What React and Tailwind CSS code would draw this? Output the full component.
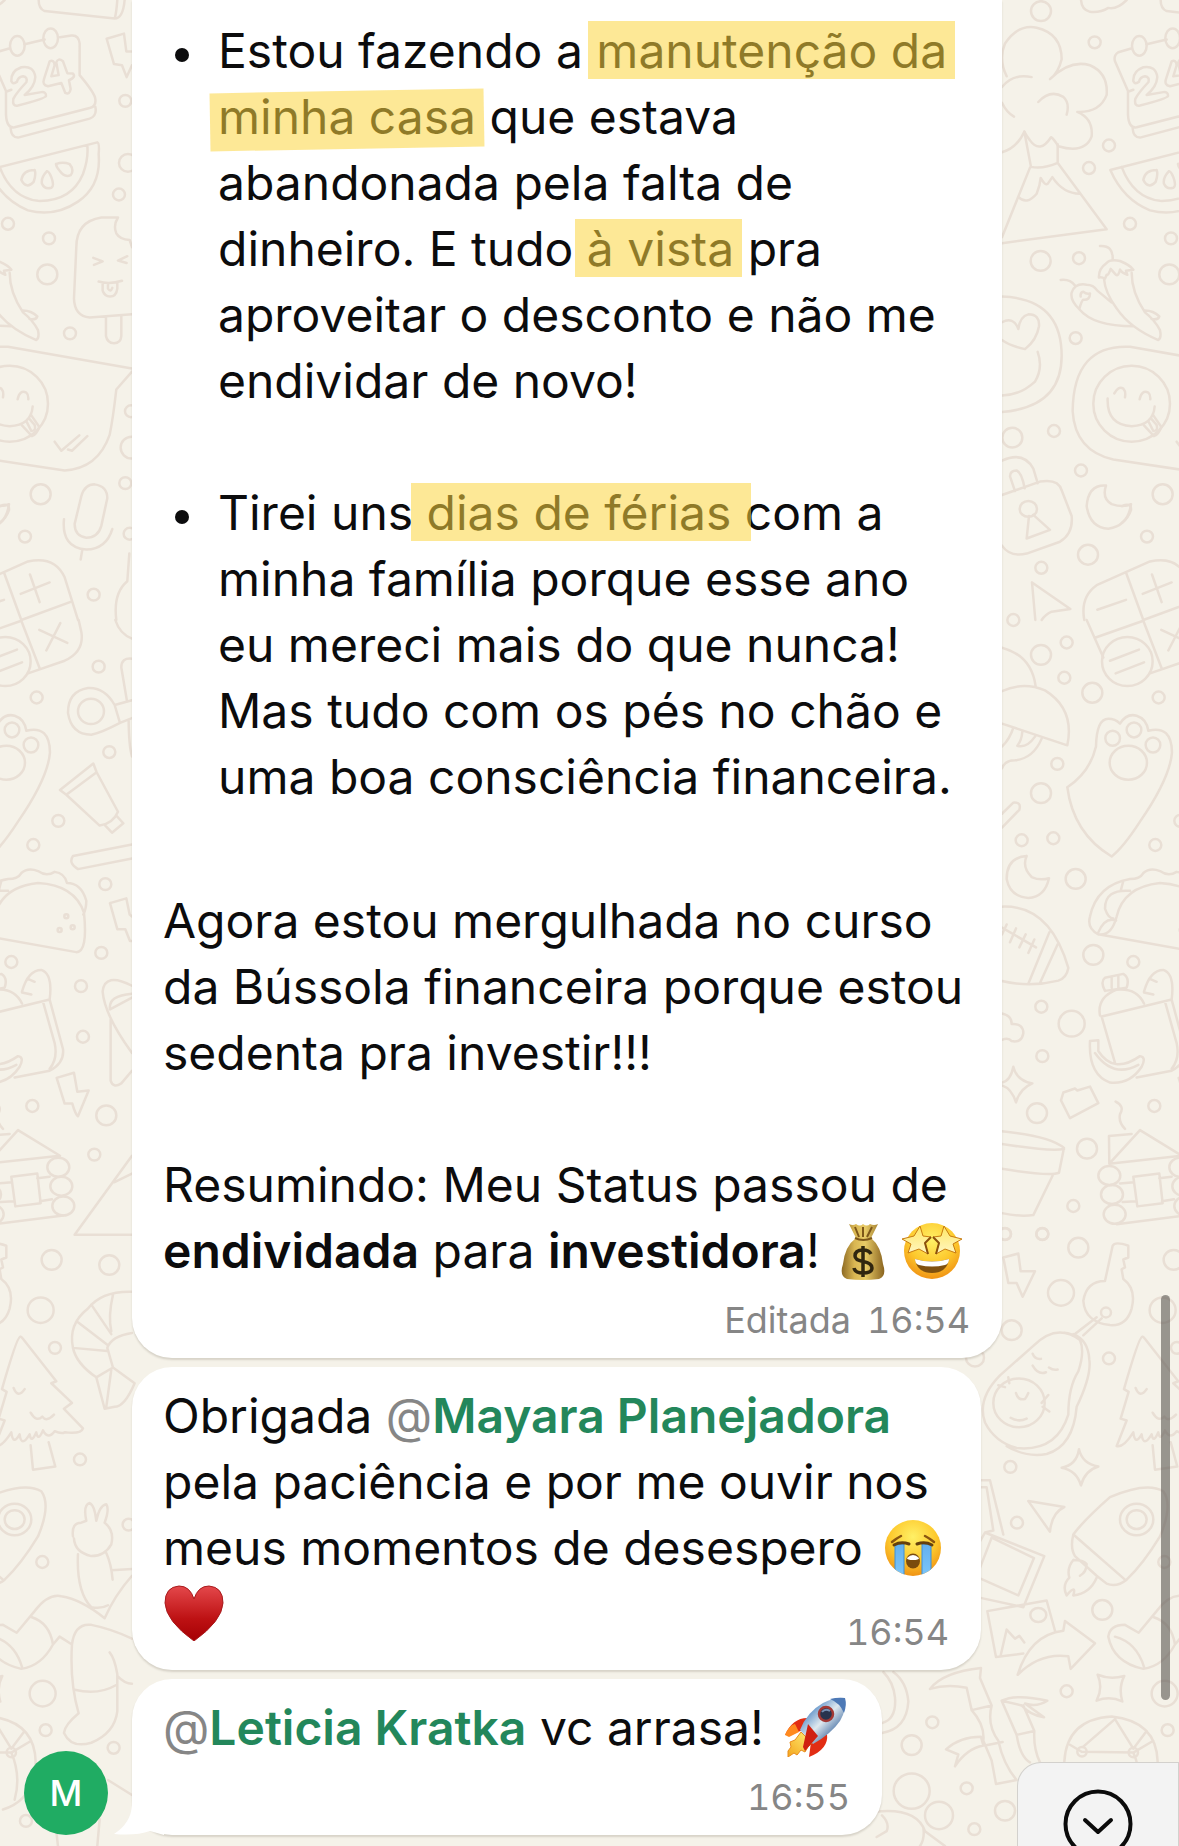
import React from "react";

/* Wallpaper doodles: [paths, circles (x, y, radius), ellipses (x, y, rx, ry)] per vertical band */
const bandTop = {
  paths: [
    "M273 0Q275 25 300 30Q330 33 355 20Q380 25 410 0M512 0Q512 22 530 28L740 47Q765 47 770 0M748 0Q745 35 740 47",
    "M50 193Q25 150 45 110Q85 60 140 70Q215 85 215 150Q205 185 180 200Q240 150 300 165Q355 185 350 240Q330 285 262 283Q310 300 305 345Q285 390 205 370Q190 350 183 347Q150 390 120 355Q110 345 103 333Q80 375 36 385M36 220Q70 185 125 195M36 260Q50 285 72 295M145 258Q180 225 220 245Q240 260 230 290",
    "M103 333L123 422Q160 428 203 412V365M120 424L36 600M36 615L350 580L205 414M85 498Q110 520 140 490Q150 470 152 450Q165 470 173 465L187 448Q220 490 270 490",
    "M426 122L385 132Q370 140 375 155L414 230V290Q416 325 440 322L665 273Q685 270 682 250Q680 235 635 190V110Q632 88 610 90L576 94M470 112L530 100M428 325Q430 348 450 348L665 300Q688 293 682 270M414 232L430 227",
    "M361 430L688 360Q695 362 692 390Q700 470 630 510Q560 550 480 532Q400 505 361 430M395 422Q430 500 510 508Q610 510 645 440Q662 400 658 368M500 430Q465 430 460 455Q475 480 497 460Q505 440 500 430M537 433Q518 450 522 465Q530 480 550 475Q560 470 550 448Q543 433 537 433M564 415Q585 408 605 415Q620 430 608 443Q590 450 575 432Q565 422 564 415",
    "M750 550H700Q625 560 625 625L618 755Q620 800 665 803L792 795M750 550Q735 570 745 590Q755 605 785 607L792 625M714 802V850Q718 868 738 868Q758 868 760 850V800M676 652L704 661L678 670M778 648L750 659L776 665M692 712Q725 720 762 710M704 716V735Q710 750 726 750Q745 750 748 730V714M720 718V730Q728 740 733 728",
    "M330 622Q370 620 368 655M327 702Q325 680 350 665Q360 655 390 660Q420 670 430 682L408 685L412 695Q395 690 390 682Q385 700 378 695L362 680Q355 698 350 695L345 705Q335 700 327 702M342 705Q345 740 380 780Q420 830 505 860Q515 855 510 835Q495 810 465 790Q425 740 425 690M212 708Q240 705 255 722M268 782Q240 760 245 740Q255 715 290 720Q310 720 322 735L365 765M268 782Q275 760 280 758Q300 760 300 742Q290 745 280 738Q270 740 272 750M268 782Q310 825 430 825M465 785Q490 785 508 800Q505 810 485 807",
    "M36 750Q215 755 215 900Q215 1030 36 1042M36 815Q70 800 85 832Q90 800 115 795Q150 795 147 825Q140 860 105 883Q60 875 36 860M143 890Q160 930 135 965Q90 1000 36 1000",
    "M792 932L420 877Q250 870 248 1040Q255 1140 370 1162L590 1190Q690 1185 725 1100Q735 1060 745 985L792 940M373 995Q385 975 400 983Q408 990 405 1005M449 1010Q455 985 475 993Q482 998 481 1010M353 1008Q350 1075 425 1078Q490 1075 494 1028M462 1076L492 1103Q505 1100 514 1080L488 1048M475 1065L490 1090Q505 1090 500 1075L485 1060M560 1117L580 1140L634 1101M600 1137L612 1140L658 1103",
    "M640 1255Q650 1225 680 1225Q718 1230 718 1260L700 1330Q690 1360 655 1360Q620 1355 620 1325ZM588 1313Q580 1385 655 1390Q715 1388 733 1338M643 1390L638 1415",
    "M36 1165Q100 1140 130 1185L143 1222M75 1242L60 1205Q60 1190 80 1190Q95 1195 104 1235M36 1252L150 1218Q205 1210 215 1240L245 1305Q250 1350 210 1370L110 1400Q60 1410 36 1380M117 1305L110 1362L180 1340L130 1302",
    "M348 1228Q295 1225 290 1280Q300 1335 355 1337Q415 1330 423 1275Q400 1285 365 1275Q335 1260 348 1228",
    "M126 1473L241 1540L185 1547Q165 1555 155 1568M126 1473L136 1568M283 1568Q270 1510 320 1480L480 1420Q560 1405 590 1460L630 1568M408 1448L460 1568L608 1522M322 1542L408 1517M458 1502L545 1473M486 1453L515 1523",
    "M784 1400L778 1470Q735 1500 745 1568M716 98L768 85L775 130L792 130M716 98L738 162L762 165L776 195L792 165M396 1280Q425 1270 423 1290Q415 1310 396 1322",
  ],
  circles: [[153,28,10],[314,107,6],[357,368,6],[297,425,6],[420,566,6],[267,653,6],[152,660,10],[257,855,6],[67,1107,10],[192,1090,6],[273,1190,6],[518,1250,10],[471,1357,6],[294,1403,10],[154,1436,6],[543,603,6],[538,694,10],[772,255,6],[753,492,6],[606,843,6],[677,1504,6],[772,1222,6],[780,412,9],[789,1040,6],[791,1132,11],[785,1350,6]],
  ellipses: [[448,116,22,25],[548,97,22,25],[425,1021,115,96],[115,1287,26,20]],
};

const bandMiddle = {
  paths: [
    "M290 0L340 95M315 45L460 2L515 122M480 135L590 103Q650 80 640 30L632 0M360 103L447 75M377 135L462 107M514 25L598 58M577 8L535 77",
    "M36 70Q125 90 137 168M36 180Q100 155 165 178Q255 225 232 317L36 262M70 272Q60 300 36 320M97 282Q95 305 82 318Q110 325 135 295M155 300Q130 350 75 355Q45 355 36 375",
    "M232 423Q300 385 318 320Q320 250 355 250Q375 250 390 262Q410 235 440 242Q470 250 475 280Q545 265 546 335Q540 400 450 510Q400 575 365 598Q250 540 232 423",
    "M740 215Q710 170 660 172Q600 180 600 235Q610 290 670 290Q700 285 756 260L740 215L792 203M756 260L792 248M792 98Q760 95 760 120L777 205M782 255Q783 320 792 345M742 0Q755 35 792 47",
    "M576 430L676 363L686 385L750 485Q735 515 695 520L595 442ZM595 442L686 385M712 520L732 538L766 514L745 495M792 568L615 597Q600 615 630 630L792 603M36 490L70 462Q95 460 88 480L36 525",
    "M110 597Q50 600 50 655Q60 700 115 703Q165 700 177 653Q150 660 125 650Q95 625 110 597M36 725Q180 720 235 880Q230 905 205 912Q120 930 36 913M178 790L115 920M203 820L150 918M36 778L138 828M50 770L36 795M78 780L60 815M107 795L88 828M133 808L115 842",
    "M325 795Q290 780 300 750Q320 670 420 655Q450 655 460 640Q480 625 510 635Q535 650 560 637Q590 640 597 665Q640 665 655 710Q655 730 646 745M325 795L625 840Q660 840 648 740Q620 670 510 665Q400 675 380 750Q365 800 325 795M400 660L392 685M325 790Q345 750 378 760M420 685Q345 680 345 730Q355 755 370 755",
    "M335 1003L545 960M335 1003L375 1120M330 1000Q320 955 380 935Q440 930 462 970M462 940Q480 885 520 885Q555 895 545 960L585 1085Q590 1120 545 1140L440 1157M525 965L560 1070Q570 1110 545 1135M345 938Q330 915 345 905L400 895Q420 905 410 930L345 938M365 905V930M385 900V930M300 1065L325 1063V1090Q370 1150 450 1103Q470 1105 455 1130Q420 1175 360 1170Q295 1150 300 1065M315 1095Q370 1160 445 1125M478 907L500 915M462 942L490 947",
    "M566 1158L618 1145L628 1193L662 1190L630 1255Q622 1250 613 1223L590 1223ZM726 716L775 704L785 745L792 750M726 716L748 782L772 782L786 812H792",
    "M36 995Q65 1000 65 1022Q100 1020 100 1045Q95 1070 65 1065Q55 1055 36 1062M36 1170Q62 1165 70 1130Q80 1165 127 1172Q90 1185 78 1220Q65 1185 36 1177M213 1215L220 1195L255 1185L262 1190L300 1180L325 1222L240 1260ZM377 1218Q405 1230 390 1250Q385 1270 405 1287",
    "M425 1300L357 1305L358 1375L450 1290L576 1355L358 1375M430 1408L508 1400L518 1475L442 1483ZM390 1425L432 1422M398 1472L438 1470M508 1412L545 1408M516 1470L552 1465M380 1528L586 1506",
    "M36 1293Q180 1305 222 1335L207 1398Q180 1408 36 1388M36 1325Q180 1345 222 1338M188 1405L130 1505Q90 1510 36 1500",
    "M792 925Q710 890 704 940Q710 1000 792 1095M728 1010V1165Q735 1185 760 1172L792 1140M792 955L726 985Q720 950 792 945M792 1355L620 1555H792M738 1422L792 1400",
  ],
  circles: [[70,0,6],[153,88,10],[230,57,6],[223,146,6],[307,184,10],[506,196,6],[202,364,6],[153,438,10],[95,557,6],[190,552,6],[496,569,6],[257,655,10],[310,847,10],[430,865,6],[154,978,6],[245,1021,13],[157,1103,6],[141,1247,10],[291,1337,10],[493,1229,6],[250,1482,6],[45,1553,6],[157,1553,6],[692,118,6],[724,334,6],[571,508,6],[712,668,6],[700,842,6],[639,926,6],[645,1054,6],[715,1253,10],[679,1352,6],[595,749,2],[575,784,2],[614,777,2]],
  ellipses: [[412,105,76,62],[368,299,22,19],[432,278,22,19],[489,316,22,19],[415,361,56,43],[669,231,39,32],[358,1405,33,24],[366,1453,33,24],[374,1503,33,24],[571,1384,33,24],[580,1432,33,24],[586,1482,33,24]],
};

const bandBottom = {
  paths: [
    "M1152 157Q1060 155 1020 200Q960 240 975 300Q985 340 1045 375L1095 350L1160 390Q1130 450 1100 450L1070 455L1045 375M1090 355L1075 450M1152 262Q1090 270 1078 300L1095 350M990 235L1078 292M1030 190L1090 265M1095 165Q1080 220 1090 258M975 300L1078 308",
    "M816 272Q806 275 762 405L776 412L752 480L770 485L740 550Q760 555 790 515Q795 550 815 520Q820 555 845 520Q850 545 865 515Q870 540 885 510Q900 535 920 512Q940 520 950 515Q1000 520 1005 505L948 455L972 440L910 390L925 385L823 275Q819 270 816 272M848 548L855 610L922 602L902 540M797 402Q810 430 830 405M848 465Q865 490 883 475Q895 490 918 470",
    "M610 775Q640 740 720 680Q830 640 880 665Q910 700 870 780Q820 850 770 890Q740 910 710 900L680 880L615 830Q600 810 610 775L765 890M610 840Q590 860 598 885Q575 905 590 930Q620 900 610 930Q660 925 680 885M610 840Q640 840 650 850Q650 870 630 880",
    "M975 780Q970 745 1000 745L1015 740Q1005 700 1025 695Q1040 700 1045 740Q1055 700 1075 698Q1085 710 1070 745Q1100 765 1090 800Q1070 830 1030 830Q980 820 978 785M990 825Q985 920 1030 960Q1060 965 1080 955M1075 822Q1090 850 1094 890M1090 866L1152 863",
    "M715 1035Q720 1005 765 1005L806 1025L860 970Q900 925 940 932Q1000 940 1070 988Q1100 930 1152 880M850 985Q905 1000 915 1055Q880 1110 820 1117Q730 1100 715 1035M735 1035Q800 1050 822 1112M915 1055L935 1035L972 1055Q980 1000 1030 1005Q1090 1015 1152 1040M972 1055Q965 1150 992 1230Q950 1260 948 1280Q970 1320 1030 1305Q1100 1280 1108 1225V1130Q1100 1090 1085 1075M980 1170Q1050 1185 1105 1158M1108 1135Q1130 1155 1152 1155",
    "M705 130L728 40Q735 28 775 40V70L760 75L765 95L755 100L760 125Q800 150 785 200Q770 245 720 242Q645 235 640 180Q650 130 705 130M695 225L640 268M680 222L610 268",
    "M630 280Q560 235 490 295L390 370Q320 430 345 490Q375 540 440 555Q560 565 595 470Q595 400 625 360Q645 310 630 280Q600 260 580 262M410 550Q470 580 530 570Q610 550 620 450Q665 370 658 330Q655 280 610 265M488 315Q495 330 513 328M537 350Q550 358 563 355M488 345Q505 370 528 362M438 415Q445 435 465 430Q470 425 475 415M422 478Q445 490 470 480M385 395L405 400M415 375L418 390M515 440L535 420M518 450L538 462",
    "M400 70L445 60L452 105L495 105L458 170L440 135H415ZM627 558Q637 595 685 602Q645 612 633 650Q620 612 575 605Q620 598 627 558M475 690L583 705Q545 720 540 768ZM683 1132Q720 1145 763 1135Q745 1165 757 1200Q720 1185 680 1198Q700 1165 683 1132",
    "M325 637H360L400 775M325 655H350L370 765L345 770L523 830L460 960L325 935M365 783L492 835L445 930L325 885M345 770L325 800M365 783L330 860M555 1020L530 943L352 970L378 1087L460 1078M392 1083L410 1017L435 1040L448 1033L463 1050M443 1132Q480 1030 580 1020L585 995L675 1052L602 1117L595 1085Q510 1075 443 1132",
    "M180 1168Q220 1125 333 1115L330 1140L365 1210Q350 1260 385 1300Q400 1360 440 1400L378 1410L365 1350L340 1300Q345 1260 305 1222L290 1165Q230 1155 180 1168M305 1222L365 1210M345 1312L398 1303M455 1210L395 1198Q440 1180 532 1198Q500 1215 465 1205L522 1240Q480 1235 455 1210M395 1198L440 1285Q450 1340 480 1355M460 1210L493 1275Q490 1320 510 1355M440 1285L493 1275M228 1322Q270 1290 333 1290L340 1312Q290 1320 255 1365L265 1335Z",
    "M583 1353Q590 1245 725 1238Q860 1250 863 1353Q860 1450 765 1475M600 1310L635 1328L790 1330L850 1300M640 1315L735 1245L790 1320L830 1275M790 1330Q820 1390 800 1450",
    "M36 1280Q110 1270 115 1200Q110 1150 70 1125M36 1255Q80 1245 75 1190Q70 1150 40 1125M20 1480Q140 1470 165 1530L225 1568M36 1490Q60 1510 50 1530L20 1545M160 1520Q165 1550 150 1568M925 1530L930 1568M1055 1500L1048 1568M1080 1400L1152 1438",
  ],
  circles: [[517,10,6],[625,45,10],[573,160,13],[425,255,10],[717,327,6],[421,603,6],[441,745,6],[697,967,10],[590,1174,6],[187,1253,6],[125,1311,10],[125,1428,18],[207,1490,14],[290,1421,6],[405,1478,10],[313,1525,6],[405,10,6],[315,325,9],[911,76,10],[1084,89,10],[878,204,13],[921,300,6],[996,584,6],[883,845,6],[884,1180,13],[893,1273,6],[1097,1318,6],[834,1504,6],[1142,750,6],[708,210,5]],
  ellipses: [[800,737,50,40],[800,737,30,24],[447,440,77,62],[505,980,24,18],[636,1328,14,12],[790,1330,14,12]],
};

function Band({ data, transform, children }) {
  return (
    <g transform={transform}>
      {data.paths.map((d) => (
        <path key={d} d={d} vectorEffect="non-scaling-stroke" />
      ))}
      {data.circles.map(([x, y, r]) => (
        <ellipse key={`${x}-${y}`} cx={x} cy={y} rx={r * 3} ry={r * 2.5} vectorEffect="non-scaling-stroke" />
      ))}
      {data.ellipses.map(([x, y, rx, ry]) => (
        <ellipse key={`${x}-${y}-${rx}`} cx={x} cy={y} rx={rx} ry={ry} vectorEffect="non-scaling-stroke" />
      ))}
      {children}
    </g>
  );
}

function Doodles() {
  return (
    <>
      <Band data={bandTop} transform="translate(990 0) scale(.3333 .3954)">
        <path
          vectorEffect="non-scaling-stroke"
          d="M430 205Q428 180 460 170Q498 165 502 195Q500 220 470 240L520 233Q535 232 534 243Q530 250 450 267Q432 270 436 250Q445 235 475 208Q480 195 465 193Q450 195 447 207Q435 215 430 205M545 155Q558 150 560 165L550 193L572 190L565 158Q570 145 585 155L598 185L615 186Q625 195 603 203L608 225Q605 240 592 235L580 210L540 218Q522 215 528 200Z"
        />
      </Band>
      <Band data={bandMiddle} transform="translate(990 620) scale(.3333 .3954)" />
      <Band data={bandBottom} transform="translate(870 1230) scale(.3333 .3929)" />
    </>
  );
}

function Wallpaper() {
  return (
    <svg aria-hidden="true" className="pointer-events-none absolute inset-0 h-full w-full">
      <g fill="none" stroke="#e9dfd5" strokeWidth="2.500" strokeLinecap="round" strokeLinejoin="round">
        <Doodles />
        <g transform="translate(-1122 0)">
          <Doodles />
        </g>
      </g>
    </svg>
  );
}

function FaceGradient({ id }) {
  return (
    <radialGradient id={id} cx=".5" cy=".3" r=".75">
      <stop offset="0" stopColor="#fff066" />
      <stop offset=".55" stopColor="#fdc92d" />
      <stop offset="1" stopColor="#ee8a10" />
    </radialGradient>
  );
}

const emoji = "inline-block align-[-12px]";

function MoneyBag() {
  return (
    <svg role="img" aria-label="saco de dinheiro" viewBox="0 0 44 58" className={`${emoji} ml-2 h-[58px] w-11`}>
      <defs>
        <linearGradient id="bag">
          <stop offset="0" stopColor="#8d6a24" />
          <stop offset=".3" stopColor="#d9b652" />
          <stop offset=".55" stopColor="#e8cb66" />
          <stop offset="1" stopColor="#8a6420" />
        </linearGradient>
      </defs>
      <path d="M8 2Q12 4 15 2Q19 5 22 2Q26 5 29 2Q33 4 37 2L30 16Q40 24 42 42Q46 54 38 57Q22 59 6 57Q-2 54 2 42Q4 24 15 16Z" fill="url(#bag)" />
      <path d="M14 5L18 15M22 5V15M31 5L26 15M14 16Q22 20 31 16" stroke="#7d5719" strokeWidth="2" fill="none" />
      <path d="M30 32Q28 28 22 28Q14 28 14 34Q14 38 22 39.500Q31 41 31 46Q31 51 22 51Q14 51 13 46M22 24V55" fill="none" stroke="#30260f" strokeWidth="3.500" />
    </svg>
  );
}

function StarStruck() {
  const star = "M19 4L22 14L30 15L24 21L27 32L18 27L7 31L10 22L1 17L13 14Z";
  return (
    <svg role="img" aria-label="rosto com olhos de estrela" viewBox="0 0 62 58" className={`${emoji} ml-4 h-[58px] w-[62px]`}>
      <defs>
        <FaceGradient id="faceStar" />
        <linearGradient id="star" x2="0" y2="1">
          <stop offset="0" stopColor="#ffe766" />
          <stop offset="1" stopColor="#fff6c2" />
        </linearGradient>
      </defs>
      <circle cx="31" cy="29" r="28" fill="url(#faceStar)" />
      <path d={star} fill="url(#star)" stroke="#c77a10" strokeWidth="1" />
      <path d={star} transform="translate(62 0) scale(-1 1)" fill="url(#star)" stroke="#c77a10" strokeWidth="1" />
      <path d="M30 15L24 21L27 32M32 15L38 21L35 32" fill="none" stroke="#8a500c" strokeWidth="2" strokeLinejoin="round" />
      <path d="M14 37Q31 42 48 37Q46 51 31 51Q16 51 14 37Z" fill="#80510f" />
      <path d="M14 37Q31 42 48 37Q48 42 44 43Q31 46 18 43Q14 42 14 37Z" fill="#fff" />
    </svg>
  );
}

function Crying() {
  return (
    <svg role="img" aria-label="rosto chorando" viewBox="0 0 58 58" className={`${emoji} ml-2 h-[58px] w-[58px]`}>
      <defs>
        <FaceGradient id="faceCry" />
        <linearGradient id="tear" x2="0" y2="1">
          <stop offset="0" stopColor="#63b0ee" />
          <stop offset="1" stopColor="#7cc6fa" />
        </linearGradient>
        <clipPath id="cryClip">
          <circle cx="29" cy="29" r="28" />
        </clipPath>
      </defs>
      <circle cx="29" cy="29" r="28" fill="url(#faceCry)" />
      <g clipPath="url(#cryClip)">
        <path d="M11 25H20V58H11ZM38 25H47V58H38Z" fill="url(#tear)" stroke="#3f8fd6" strokeWidth="1" />
      </g>
      <path d="M8 23Q13 19 17 17M50 23Q45 19 41 17" stroke="#8a5510" strokeWidth="2.500" fill="none" strokeLinecap="round" />
      <path d="M10 26Q17 22 25 25M48 26Q41 22 33 25" stroke="#65400c" strokeWidth="3" fill="none" strokeLinecap="round" />
      <ellipse cx="29" cy="42" rx="7" ry="7.500" fill="#7a4b0d" />
      <path d="M23 39Q29 33 35 39Q35 41 29 41Q23 41 23 39Z" fill="#fff" />
    </svg>
  );
}

function Heart() {
  return (
    <svg role="img" aria-label="coração" viewBox="0 0 60 56" className="mt-1 ml-px h-14 w-[60px]">
      <defs>
        <linearGradient id="heart" x2="0" y2="1">
          <stop offset="0" stopColor="#e4484b" />
          <stop offset=".6" stopColor="#bd1113" />
          <stop offset="1" stopColor="#a50004" />
        </linearGradient>
      </defs>
      <path d="M30 14Q26 1 15 1Q1 2 1 18Q2 36 30 56Q58 36 59 18Q59 2 45 1Q34 1 30 14Z" fill="url(#heart)" stroke="#a81a1c" strokeWidth="1" />
    </svg>
  );
}

function Rocket() {
  return (
    <svg role="img" aria-label="foguete" viewBox="0 0 62 60" className={`${emoji} ml-2 h-[60px] w-[62px]`}>
      <defs>
        <linearGradient id="hull" x1=".2" y1=".2" x2=".8" y2=".8">
          <stop offset="0" stopColor="#4d86c4" />
          <stop offset=".5" stopColor="#dfe8ee" />
          <stop offset="1" stopColor="#3c689f" />
        </linearGradient>
        <linearGradient id="flame" x1="1" y1="0" x2="0" y2="1">
          <stop offset="0" stopColor="#fff27a" />
          <stop offset="1" stopColor="#f4a51c" />
        </linearGradient>
      </defs>
      <path d="M24 21Q8 20 0 38L16 34ZM42 37Q44 52 24 60L26 45Z" fill="#e22d14" />
      <path d="M4 40L0 38Q4 28 10 27L14 35Z" fill="#ff8a1f" />
      <path d="M16 35L27 46Q22 50 20 55L16 53L12 58L9 56L3 60L3 54L6 50L5 45L10 43Z" fill="url(#flame)" stroke="#e88c1c" strokeWidth="1" />
      <path d="M15 33Q22 15 38 6Q50 0 60 1Q62 12 55 24Q46 37 28 47Z" fill="url(#hull)" />
      <path d="M45 2Q53 0 60 1Q62 8 59 16Q55 6 45 2Z" fill="#4d79b6" />
      <path d="M23 27L33 39L20 54L18 50Z" fill="#cf2011" />
      <circle cx="41" cy="17" r="7" fill="#28334d" stroke="#a33834" strokeWidth="2.500" />
      <path d="M37 15Q40 11 45 14" fill="none" stroke="#7890b3" strokeWidth="2" />
    </svg>
  );
}

function Mark({ children, tint = "-left-2 -right-2 top-0" }) {
  return (
    <mark className="relative whitespace-nowrap bg-transparent text-inherit">
      {children}
      <span aria-hidden="true" className={`absolute h-[58px] bg-[#fcd540]/55 ${tint}`} />
    </mark>
  );
}

function Bullet({ children }) {
  return (
    <li className="flex">
      <span aria-hidden="true" className="ml-3 mt-[30px] mr-[29px] size-[14px] shrink-0 rounded-full bg-[#0c0c0d]" />
      <p>{children}</p>
    </li>
  );
}

function Mention({ name }) {
  return (
    <>
      <span className="text-[#868686]">@</span>
      <a href="#perfil" className="font-semibold text-[#23875b]">{name}</a>
    </>
  );
}

const bubble = "relative bg-white pl-[31px] pr-8 pb-4 shadow-[0_2px_2px_rgba(60,50,30,0.16)]";
const meta = "text-right text-[36px] leading-[44px] tabular-nums text-[#868686]";

export default function App() {
  return (
    <main className="relative min-h-screen overflow-hidden bg-[#f5f2e9] pb-[11px] font-['Inter','Liberation_Sans',sans-serif] text-[48px] leading-[66px] text-[#0c0c0d]">
      <Wallpaper />

      <section aria-label="Mensagens" className="relative flex flex-col gap-[9px] pr-[177px]">
        <article className={`${bubble} ml-[132px] rounded-b-[40px] pt-[18px]`}>
          <ul className="mb-[78px] flex flex-col gap-[66px]">
            <Bullet>
              Estou fazendo a <Mark>manutenção da</Mark>{" "}
              <Mark tint="-left-2 -right-2 top-1 -rotate-1">minha casa</Mark> que estava abandonada pela falta de
              dinheiro. E tudo <Mark tint="-left-3 -right-2 top-0">à vista</Mark> pra aproveitar o desconto e não me
              endividar de novo!
            </Bullet>
            <Bullet>
              Tirei uns <Mark tint="-left-4 -right-5 top-0">dias de férias</Mark> com a minha família porque esse ano
              eu mereci mais do que nunca! Mas tudo com os pés no chão e uma boa consciência financeira.
            </Bullet>
          </ul>
          <p>Agora estou mergulhada no curso da Bússola financeira porque estou sedenta pra investir!!!</p>
          <p className="mt-[66px]">
            Resumindo: Meu Status passou de
            <br />
            <strong className="font-semibold">endividada</strong> para{" "}
            <strong className="font-semibold">investidora</strong>! <MoneyBag />
            <StarStruck />
          </p>
          <p className={`${meta} mt-[14px]`}>
            <span className="mr-4">Editada</span>
            <time>16:54</time>
          </p>
        </article>

        <article className={`${bubble} ml-[132px] w-[849px] max-w-full rounded-[40px] pt-4`}>
          <p>
            Obrigada <Mention name="Mayara Planejadora" />
            <br />
            pela paciência e por me ouvir nos meus momentos de desespero <Crying />
          </p>
          <div className="flex h-[73px] items-end justify-between">
            <span className="self-start">
              <Heart />
            </span>
            <time className={meta}>16:54</time>
          </div>
        </article>

        <div className="flex items-end">
          <div className="w-[132px] shrink-0 pl-6">
            <div className="flex size-[84px] items-center justify-center rounded-full bg-[#20ac63] text-[36px] font-medium text-white">
              M
            </div>
          </div>
          <article className={`${bubble} w-[750px] rounded-[40px] pt-4`}>
            <svg aria-hidden="true" viewBox="0 0 50 50" className="absolute bottom-0 -left-[18px] size-[50px]">
              <path d="M18 0V20Q17 38 0 49Q22 51 36 46L50 50V0Z" fill="#fff" />
            </svg>
            <p className="relative">
              <Mention name="Leticia Kratka" /> vc arrasa! <Rocket />
            </p>
            <p className={`${meta} mt-[14px]`}>
              <time>16:55</time>
            </p>
          </article>
        </div>
      </section>

      <div aria-hidden="true" className="absolute top-[1295px] right-[9px] h-[405px] w-[9px] rounded-full bg-[#5a5652]/60" />

      <button
        type="button"
        aria-label="Ir para o fim da conversa"
        className="absolute right-0 bottom-0 flex h-[84px] w-[162px] items-start justify-center overflow-hidden rounded-tl-[24px] border border-b-0 border-[#d3d1cd] bg-[#f3f3f3] pt-[26px]"
      >
        <svg viewBox="0 0 70 70" className="size-[70px] shrink-0" fill="none" stroke="#0b0b0b" strokeWidth="4" strokeLinecap="round" strokeLinejoin="round">
          <circle cx="35" cy="35" r="32.500" />
          <path d="M22 31L35 43L48 31" />
        </svg>
      </button>
    </main>
  );
}
